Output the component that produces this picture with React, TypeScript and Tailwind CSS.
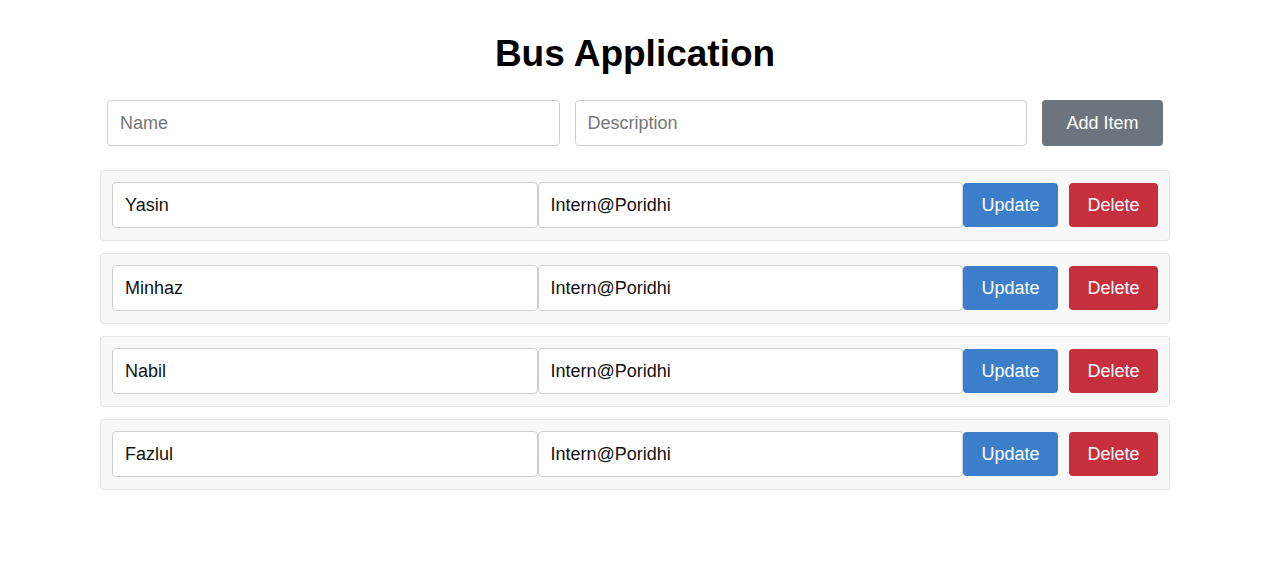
import React, { useState } from 'react';

type Item = { id: number; name: string; description: string };

const initialItems: Item[] = [
  { id: 1, name: 'Yasin', description: 'Intern@Poridhi' },
  { id: 2, name: 'Minhaz', description: 'Intern@Poridhi' },
  { id: 3, name: 'Nabil', description: 'Intern@Poridhi' },
  { id: 4, name: 'Fazlul', description: 'Intern@Poridhi' },
];

const inputClass =
  'h-[46px] min-w-0 rounded-[4px] border border-[#cfcfcf] bg-white px-3 text-[18px] text-[#111] placeholder:text-[#767676] outline-none';

export default function App() {
  const [items, setItems] = useState<Item[]>(initialItems);
  const [name, setName] = useState('');
  const [description, setDescription] = useState('');

  const handleAdd = () => {
    if (!name) return;
    setItems(prev => [...prev, { id: Date.now(), name, description }]);
    setName('');
    setDescription('');
  };

  const handleChange = (id: number, field: 'name' | 'description', value: string) => {
    setItems(prev => prev.map(it => (it.id === id ? { ...it, [field]: value } : it)));
  };

  const handleDelete = (id: number) => {
    setItems(prev => prev.filter(it => it.id !== id));
  };

  return (
    <div className="min-h-screen bg-white font-['Liberation_Sans',Arial,sans-serif]">
      <div className="ml-[100px] w-[1070px] pt-[32px]">
        <h1 className="text-center text-[37px] leading-[44px] font-bold text-black">Bus Application</h1>

        {/* Add form */}
        <div className="mt-[24px] flex gap-[15px] px-[7px]">
          <input
            className={`${inputClass} flex-1`}
            placeholder="Name"
            value={name}
            onChange={e => setName(e.target.value)}
          />
          <input
            className={`${inputClass} flex-1`}
            placeholder="Description"
            value={description}
            onChange={e => setDescription(e.target.value)}
          />
          <button
            onClick={handleAdd}
            className="h-[46px] w-[121px] rounded-[4px] bg-[#6c757d] text-[18px] text-white"
          >
            Add Item
          </button>
        </div>

        {/* Items */}
        <div className="mt-[24px] flex flex-col gap-[12px]">
          {items.map(item => (
            <div
              key={item.id}
              className="flex h-[71px] items-start rounded-[4px] border border-[#e4e4e4] bg-[#f8f8f8] px-[11px] pt-[11px]"
            >
              <input
                className={`${inputClass} flex-1`}
                value={item.name}
                onChange={e => handleChange(item.id, 'name', e.target.value)}
              />
              <input
                className={`${inputClass} flex-1`}
                value={item.description}
                onChange={e => handleChange(item.id, 'description', e.target.value)}
              />
              <button className="mt-px h-[44px] w-[95px] rounded-[4px] bg-[#3c7ec9] text-[18px] text-white">
                Update
              </button>
              <button
                onClick={() => handleDelete(item.id)}
                className="mt-px ml-[11px] h-[44px] w-[89px] rounded-[4px] bg-[#c52f3e] text-[18px] text-white"
              >
                Delete
              </button>
            </div>
          ))}
        </div>
      </div>
    </div>
  );
}
